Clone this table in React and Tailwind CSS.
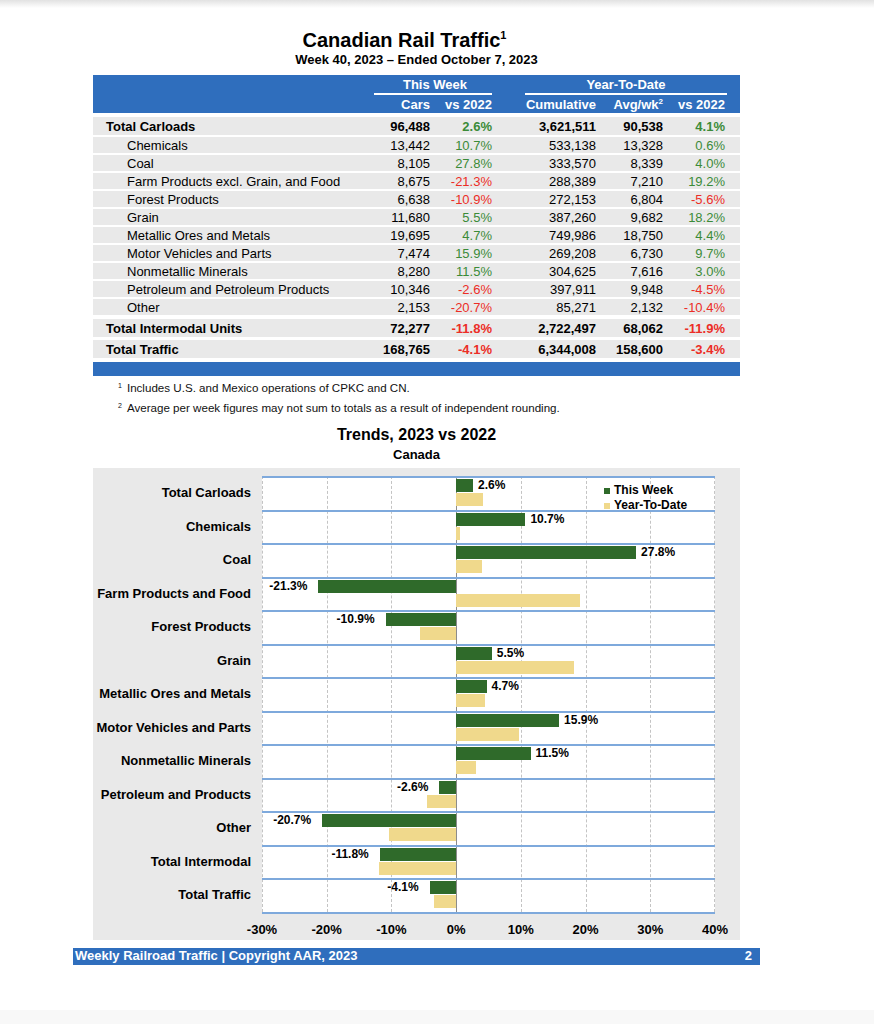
const rows = [
  { label: 'Total Carloads', cars: '96,488', wk: '2.6%', cum: '3,621,511', avg: '90,538', ytd: '4.1%', bold: true, gap: 'mt-[4px]' },
  { label: 'Chemicals', cars: '13,442', wk: '10.7%', cum: '533,138', avg: '13,328', ytd: '0.6%' },
  { label: 'Coal', cars: '8,105', wk: '27.8%', cum: '333,570', avg: '8,339', ytd: '4.0%' },
  { label: 'Farm Products excl. Grain, and Food', cars: '8,675', wk: '-21.3%', cum: '288,389', avg: '7,210', ytd: '19.2%' },
  { label: 'Forest Products', cars: '6,638', wk: '-10.9%', cum: '272,153', avg: '6,804', ytd: '-5.6%' },
  { label: 'Grain', cars: '11,680', wk: '5.5%', cum: '387,260', avg: '9,682', ytd: '18.2%' },
  { label: 'Metallic Ores and Metals', cars: '19,695', wk: '4.7%', cum: '749,986', avg: '18,750', ytd: '4.4%' },
  { label: 'Motor Vehicles and Parts', cars: '7,474', wk: '15.9%', cum: '269,208', avg: '6,730', ytd: '9.7%' },
  { label: 'Nonmetallic Minerals', cars: '8,280', wk: '11.5%', cum: '304,625', avg: '7,616', ytd: '3.0%' },
  { label: 'Petroleum and Petroleum Products', cars: '10,346', wk: '-2.6%', cum: '397,911', avg: '9,948', ytd: '-4.5%' },
  { label: 'Other', cars: '2,153', wk: '-20.7%', cum: '85,271', avg: '2,132', ytd: '-10.4%' },
  { label: 'Total Intermodal Units', cars: '72,277', wk: '-11.8%', cum: '2,722,497', avg: '68,062', ytd: '-11.9%', bold: true, gap: 'mt-[4px]' },
  { label: 'Total Traffic', cars: '168,765', wk: '-4.1%', cum: '6,344,008', avg: '158,600', ytd: '-3.4%', bold: true, gap: 'mt-[3px]' },
]

const trends = [
  ['Total Carloads', 2.6, 4.1],
  ['Chemicals', 10.7, 0.6],
  ['Coal', 27.8, 4.0],
  ['Farm Products and Food', -21.3, 19.2],
  ['Forest Products', -10.9, -5.6],
  ['Grain', 5.5, 18.2],
  ['Metallic Ores and Metals', 4.7, 4.4],
  ['Motor Vehicles and Parts', 15.9, 9.7],
  ['Nonmetallic Minerals', 11.5, 3.0],
  ['Petroleum and Products', -2.6, -4.5],
  ['Other', -20.7, -10.4],
  ['Total Intermodal', -11.8, -11.9],
  ['Total Traffic', -4.1, -3.4],
]

// plot is 453px wide for -30%..40%
const PLOT_W = 453
const PX = PLOT_W / 70
const ZERO = 30 * PX
const ticks = ['-30%', '-20%', '-10%', '0%', '10%', '20%', '30%', '40%']

const pct = (v) => (v.startsWith('-') ? 'text-[#ec2d26]' : 'text-[#3b8b38]')

function Bar({ value, top, color }) {
  const w = Math.abs(value) * PX
  const left = value >= 0 ? ZERO : ZERO - w
  return (
    <div
      className={`absolute h-[13px] ${color} ${top}`}
      style={{ left, width: w }}
    />
  )
}

function TableRow({ row }) {
  const height = row.bold ? 'h-[18px]' : 'h-[16px]'
  return (
    <div
      className={`grid grid-cols-[281px_56px_62px_104px_67px_62px] items-center bg-[#e9e9e9] pt-[1px] text-[13px] leading-none ${height} ${row.gap || 'mt-[2px]'} ${row.bold ? 'font-bold' : ''}`}
    >
      <div className={row.bold ? 'pl-[13px]' : 'pl-[34px]'}>{row.label}</div>
      <div className="text-right">{row.cars}</div>
      <div className={`text-right ${pct(row.wk)}`}>{row.wk}</div>
      <div className="text-right">{row.cum}</div>
      <div className="text-right">{row.avg}</div>
      <div className={`text-right ${pct(row.ytd)}`}>{row.ytd}</div>
    </div>
  )
}

export default function App() {
  return (
    <div className="flex min-h-screen flex-col bg-white text-black" style={{ fontFamily: '"Liberation Sans", Arial, sans-serif' }}>
      <div className="h-[8px] bg-gradient-to-b from-[#e2e2e2] to-white" />

      <main className="ml-[73px] w-[687px]">
        <h1 className="mt-[21px] h-[22px] pr-[24px] text-center text-[20px] font-bold leading-[22px]">
          Canadian Rail Traffic<span className="relative -top-[8px] text-[11px]">1</span>
        </h1>
        <p className="mt-[1px] text-center text-[13px] font-bold leading-[16px]">
          Week 40, 2023 – Ended October 7, 2023
        </p>

        <section className="mx-[20px] mt-[7px]">
          <div className="h-[38px] bg-[#2f6ebd] text-[13px] font-bold text-white">
            <div className="grid h-[20px] grid-cols-[281px_118px_233px]">
              <div />
              <div className="border-b-2 border-white pl-[4px] pt-[2px] text-center leading-[16px]">This Week</div>
              <div className="ml-[33px] mr-[-2px] border-b-2 border-white pt-[2px] text-center leading-[16px]">Year-To-Date</div>
            </div>
            <div className="grid h-[18px] grid-cols-[281px_56px_62px_104px_67px_62px] pt-[2px] leading-[16px]">
              <div />
              <div className="text-right">Cars</div>
              <div className="text-right">vs 2022</div>
              <div className="text-right">Cumulative</div>
              <div className="text-right">
                Avg/wk<span className="relative -top-[5px] text-[8px]">2</span>
              </div>
              <div className="text-right">vs 2022</div>
            </div>
          </div>

          {rows.map((row) => (
            <TableRow key={row.label} row={row} />
          ))}

          <div className="mt-[4px] h-[14px] bg-[#2f6ebd]" />

          <div className="mt-[3px] pl-[25px] text-[11.6px] leading-[18px] text-[#111]">
            <p>
              <span className="relative -top-[4px] mr-[5px] text-[7px]">1</span>Includes U.S. and Mexico operations of CPKC and CN.
            </p>
            <p>
              <span className="relative -top-[4px] mr-[5px] text-[7px]">2</span>Average per week figures may not sum to totals as a result of independent rounding.
            </p>
          </div>
        </section>

        <h2 className="mt-[6px] text-center text-[16px] font-bold leading-[20px]">Trends, 2023 vs 2022</h2>
        <p className="mt-[2px] text-center text-[13px] font-bold leading-[16px]">Canada</p>

        <section className="mx-[20px] mt-[5px] bg-[#e9e9e9] pb-[3px] pt-[8px]">
          <div className="flex">
            <div className="w-[169px] pr-[11px]">
              {trends.map(([name]) => (
                <div key={name} className="flex h-[33.5px] items-center justify-end text-[13px] font-bold">
                  {name}
                </div>
              ))}
            </div>

            <div className="relative w-[453px] border-b-2 border-[#7ea9dc] bg-white">
              <div className="absolute inset-0">
                {ticks.map((t, i) => (
                  <div
                    key={t}
                    className={`absolute bottom-0 top-0 ${i === 3 ? 'border-l border-[#8c8c8c]' : 'border-l border-dashed border-[#c4c4c4]'}`}
                    style={{ left: Math.min(i * 10 * PX, PLOT_W - 1) }}
                  />
                ))}
              </div>

              {trends.map(([name, wk, ytd]) => {
                const w = Math.abs(wk) * PX
                return (
                  <div key={name} className="relative h-[33.5px] border-t-2 border-[#7ea9dc]">
                    <Bar value={wk} top="top-[1px]" color="bg-[#2f6a2a]" />
                    <Bar value={ytd} top="top-[15px]" color="bg-[#f0d98c]" />
                    <span
                      className="absolute top-[1px] text-[12px] font-bold leading-[13px]"
                      style={wk >= 0 ? { left: ZERO + w + 5 } : { right: PLOT_W - (ZERO - w) + 11 }}
                    >
                      {wk.toFixed(1)}%
                    </span>
                  </div>
                )
              })}

              <div className="absolute left-[342px] top-[7px] z-10 text-[12px] font-bold leading-[15px]">
                <div className="flex items-center gap-[4px]">
                  <span className="h-[6px] w-[6px] bg-[#2f6a2a]" />
                  This Week
                </div>
                <div className="flex items-center gap-[4px]">
                  <span className="h-[6px] w-[6px] bg-[#f0d98c]" />
                  Year-To-Date
                </div>
              </div>
            </div>
          </div>

          <div className="relative ml-[169px] mt-[9px] h-[14px] w-[453px] text-[13px] font-bold leading-[14px]">
            {ticks.map((t, i) => (
              <span key={t} className="absolute -translate-x-1/2" style={{ left: i * 10 * PX }}>
                {t}
              </span>
            ))}
          </div>
        </section>

        <footer className="mt-[8px] flex h-[17px] items-center justify-between bg-[#2f6ebd] pl-[2px] pr-[8px] text-[13px] font-bold text-white">
          <span>Weekly Railroad Traffic | Copyright AAR, 2023</span>
          <span>2</span>
        </footer>
      </main>

      <div className="mt-auto h-[14px] bg-[#f8f8f8]" />
    </div>
  )
}
